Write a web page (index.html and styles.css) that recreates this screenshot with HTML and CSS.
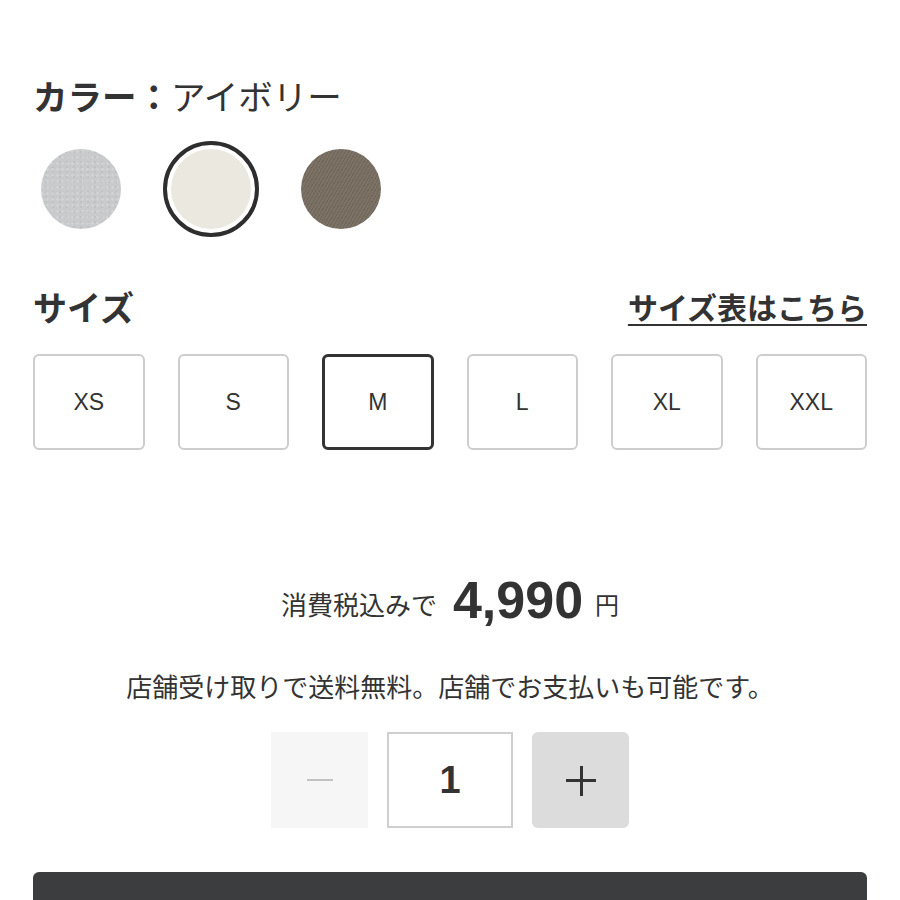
FILE: index.html
```html
<!DOCTYPE html>
<html lang="ja">
<head>
    <meta charset="UTF-8">
    <meta name="viewport" content="width=device-width, initial-scale=1.0">
    <title>商品詳細</title>
    <link rel="stylesheet" href="styles.css">
</head>
<body>
    <div class="product">
        <div class="colorlabel"><b>カラー：</b>アイボリー</div>
        <div class="swatches">
            <div class="swatch"><span class="dot gray"></span></div>
            <div class="swatch selected"><span class="dot ivory"></span></div>
            <div class="swatch"><span class="dot brown"></span></div>
        </div>

        <div class="sizehead">
            <div class="sizetitle">サイズ</div>
            <a class="sizelink" href="#">サイズ表はこちら</a>
        </div>
        <div class="sizes">
            <div class="size">XS</div>
            <div class="size">S</div>
            <div class="size active">M</div>
            <div class="size">L</div>
            <div class="size">XL</div>
            <div class="size">XXL</div>
        </div>

        <div class="price">
            <span class="taxnote">消費税込みで</span>
            <span class="amount">4,990</span>
            <span class="yen">円</span>
        </div>
        <div class="notice">店舗受け取りで送料無料。店舗でお支払いも可能です。</div>

        <div class="qty">
            <div class="qtybtn minus"><span class="line"></span></div>
            <div class="qtyval">1</div>
            <div class="qtybtn plus"><span class="line"></span><span class="line vert"></span></div>
        </div>

        <div class="cartbar"></div>
    </div>
</body>
</html>
```

FILE: styles.css
```css
body{
    margin: 0;
    background: #fff;
    color: #333;
    font-family: "Liberation Sans", "Noto Sans CJK JP", sans-serif;
}
.product{
    padding: 74px 33px 0 33px;
}
.colorlabel{
    font-family: "Noto Sans CJK JP", sans-serif;
    font-size: 34.5px;
    line-height: 42px;
    color: #333;
}
.colorlabel b{
    font-weight: 700;
}
.swatches{
    display: flex;
    gap: 34px;
    margin-top: 25px;
}
.swatch{
    width: 96px;
    height: 96px;
    box-sizing: border-box;
    border-radius: 50%;
    display: flex;
    align-items: center;
    justify-content: center;
}
.swatch.selected{
    border: 4px solid #2e2e2e;
}
.dot{
    width: 80px;
    height: 80px;
    border-radius: 50%;
    display: block;
}
.gray{
    background-color: #c8cacc;
    background-image: radial-gradient(circle at 30% 40%, rgba(255,255,255,.18) 0 1px, transparent 1.5px),
        radial-gradient(circle at 70% 60%, rgba(140,140,145,.15) 0 1px, transparent 1.5px);
    background-size: 5px 6px, 7px 5px;
}
.ivory{
    background: #ebe8e0;
}
.brown{
    background-color: #7c7266;
    background-image: repeating-linear-gradient(-60deg, rgba(60,50,40,.2) 0 1px, rgba(255,255,255,0) 1px 3px);
}
.sizehead{
    display: flex;
    justify-content: space-between;
    align-items: center;
    margin-top: 49px;
    height: 40px;
}
.sizetitle{
    font-family: "Noto Sans CJK JP", sans-serif;
    font-size: 34px;
    font-weight: 700;
}
.sizelink{
    font-family: "Noto Sans CJK JP", sans-serif;
    font-size: 30px;
    font-weight: 700;
    color: #333;
    text-decoration: underline;
    text-decoration-thickness: 2px;
    text-underline-offset: 5px;
}
.sizes{
    display: grid;
    grid-template-columns: repeat(6, 1fr);
    gap: 33px;
    margin-top: 28px;
}
.size{
    height: 96px;
    box-sizing: border-box;
    border: 2px solid #cdcdcd;
    border-radius: 6px;
    display: flex;
    align-items: center;
    justify-content: center;
    font-size: 23px;
    color: #333;
}
.size.active{
    border: 3px solid #333;
}
.price{
    margin-top: 122px;
    height: 56px;
    display: flex;
    align-items: center;
    justify-content: center;
}
.taxnote{
    font-family: "Noto Sans CJK JP", sans-serif;
    font-size: 26px;
    margin-right: 16px;
    margin-top: 6px;
}
.amount{
    font-size: 52px;
    font-weight: 700;
}
.yen{
    font-family: "Noto Sans CJK JP", sans-serif;
    font-size: 24px;
    margin-left: 12px;
    margin-top: 6px;
}
.notice{
    font-family: "Noto Sans CJK JP", sans-serif;
    text-align: center;
    font-size: 26px;
    line-height: 34px;
    margin-top: 41px;
}
.qty{
    display: flex;
    justify-content: center;
    gap: 19px;
    margin-top: 29px;
}
.qtybtn{
    width: 97px;
    height: 96px;
    position: relative;
}
.minus{
    background: #f6f6f6;
}
.plus{
    background: #dcdcdc;
    border-radius: 6px;
}
.line{
    position: absolute;
    left: 50%;
    top: 50%;
    width: 30px;
    height: 3px;
    margin: -1px 0 0 -15px;
    background: #333;
}
.minus .line{
    width: 26px;
    height: 2px;
    margin-left: -13px;
    background: #c2c2c2;
}
.line.vert{
    width: 3px;
    height: 30px;
    margin: -14px 0 0 -1px;
}
.qtyval{
    width: 126px;
    height: 96px;
    box-sizing: border-box;
    border: 2px solid #cfcfcf;
    display: flex;
    align-items: center;
    justify-content: center;
    font-size: 38px;
    font-weight: 700;
}
.cartbar{
    margin-top: 44px;
    height: 70px;
    background: #3c3d3f;
    border-radius: 6px 6px 0 0;
}
```
